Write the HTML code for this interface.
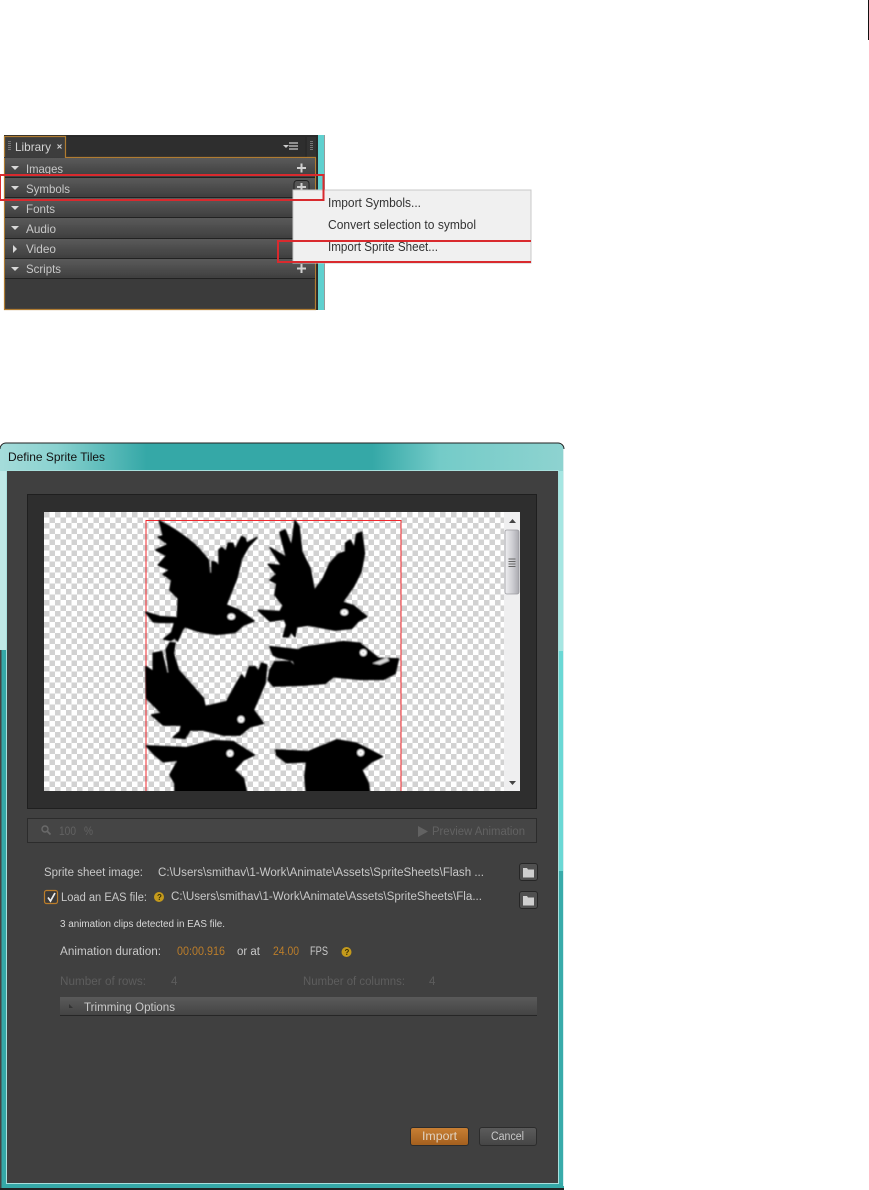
<!DOCTYPE html>
<html><head><meta charset="utf-8"><title>Define Sprite Tiles</title>
<style>
html,body{margin:0;padding:0;background:#fff;width:869px;height:1190px;overflow:hidden}
svg{display:block}
text{font-family:"Liberation Sans",sans-serif;font-size:11.500px}
</style></head><body>
<svg width="869" height="1190" viewBox="0 0 869 1190" xmlns="http://www.w3.org/2000/svg">
<defs>
<pattern id="chk" x="44" y="512" width="11" height="11" patternUnits="userSpaceOnUse">
<rect width="11" height="11" fill="#fff"/><rect width="5.500" height="5.500" fill="#d2d2d2"/><rect x="5.500" y="5.500" width="5.500" height="5.500" fill="#d2d2d2"/>
</pattern>
<linearGradient id="row" x1="0" y1="0" x2="0" y2="1"><stop offset="0" stop-color="#5a5a5a"/><stop offset="1" stop-color="#3f3f3f"/></linearGradient>
<linearGradient id="title" x1="0" y1="0" x2="1" y2="0"><stop offset="0" stop-color="#a5dcda"/><stop offset=".1" stop-color="#8ad2d0"/><stop offset=".26" stop-color="#35a8a7"/><stop offset=".66" stop-color="#35a8a7"/><stop offset=".78" stop-color="#74cbc8"/><stop offset="1" stop-color="#8ed3d0"/></linearGradient>
<linearGradient id="thumb" x1="0" y1="0" x2="1" y2="0"><stop offset="0" stop-color="#f0f0f2"/><stop offset=".6" stop-color="#c9c9ce"/><stop offset="1" stop-color="#a8a8ae"/></linearGradient>
<linearGradient id="imp" x1="0" y1="0" x2="0" y2="1"><stop offset="0" stop-color="#c98034"/><stop offset="1" stop-color="#a35f1e"/></linearGradient>
<linearGradient id="can" x1="0" y1="0" x2="0" y2="1"><stop offset="0" stop-color="#5c5c5c"/><stop offset="1" stop-color="#454545"/></linearGradient>
<linearGradient id="trim" x1="0" y1="0" x2="0" y2="1"><stop offset="0" stop-color="#5a5a5a"/><stop offset="1" stop-color="#444"/></linearGradient>
<clipPath id="pv"><rect x="44" y="512" width="460" height="279"/></clipPath>
<filter id="soft" x="-5%" y="-5%" width="110%" height="110%"><feGaussianBlur stdDeviation="0.7"/></filter>
<filter id="lite" x="-2%" y="-2%" width="104%" height="104%"><feGaussianBlur stdDeviation="0.35"/></filter>
</defs>

<rect width="869" height="1190" fill="#fff"/>
<rect x="868" y="0" width="1" height="40" fill="#111"/>

<!-- Library panel -->
<g filter="url(#lite)">
<rect x="4" y="135" width="320" height="175" fill="#2b2b2b"/>
<rect x="318" y="135" width="6" height="175" fill="#5fd0cf"/>
<rect x="324" y="135" width="1" height="175" fill="#999"/>
<rect x="4" y="157" width="312" height="153" fill="#3b3b3b"/>
<rect x="66" y="137" width="239" height="20" fill="#2d2d2d"/>
<rect x="307" y="137" width="9" height="20" fill="#333"/>
<rect x="5" y="137" width="60" height="20" fill="#3d3d3d"/>
<path d="M4.500 157V136.500H65.500V157.500H316" fill="none" stroke="#b07c30" stroke-width="1.200"/>
<path d="M4.500 158V309.500H315.500V157.500" fill="none" stroke="#b07c30" stroke-width="1.200"/>
<g fill="#767676"><rect x="8" y="141" width="3" height="1"/><rect x="8" y="143" width="3" height="1"/><rect x="8" y="145" width="3" height="1"/><rect x="8" y="147" width="3" height="1"/><rect x="8" y="149" width="3" height="1"/><rect x="310" y="141" width="3" height="1"/><rect x="310" y="143" width="3" height="1"/><rect x="310" y="145" width="3" height="1"/><rect x="310" y="147" width="3" height="1"/><rect x="310" y="149" width="3" height="1"/></g>
<text x="15" y="151" fill="#d4d4d4" style="font-size:12px" textLength="36" lengthAdjust="spacingAndGlyphs">Library</text>
<path d="M57.500 144.500l4 4m0-4l-4 4" stroke="#d0d0d0" stroke-width="1.100"/>
<path d="M283 145h6l-3 3z" fill="#ccc"/><path d="M289 143h9M289 146h9M289 149h9" stroke="#ccc" stroke-width="1.200"/>

<rect x="5" y="158" width="310" height="19" fill="url(#row)"/><rect x="5" y="177" width="310" height="1" fill="#222"/>
<rect x="5" y="178" width="310" height="19" fill="url(#row)"/><rect x="5" y="197" width="310" height="1" fill="#222"/>
<rect x="5" y="198" width="310" height="19" fill="url(#row)"/><rect x="5" y="217" width="310" height="1" fill="#222"/>
<rect x="5" y="218" width="310" height="20" fill="url(#row)"/><rect x="5" y="238" width="310" height="1" fill="#222"/>
<rect x="5" y="239" width="310" height="19" fill="url(#row)"/><rect x="5" y="258" width="310" height="1" fill="#222"/>
<rect x="5" y="259" width="310" height="19" fill="url(#row)"/><rect x="5" y="278" width="310" height="1" fill="#222"/>

<g fill="#d8d8d8">
<path d="M11 166h8l-4 4z"/><path d="M11 186h8l-4 4z"/><path d="M11 206h8l-4 4z"/><path d="M11 226h8l-4 4z"/><path d="M13 245v8l4-4z"/><path d="M11 267h8l-4 4z"/>
</g>
<g fill="#c8c8c8" style="font-size:12px">
<text x="26" y="173" style="font-size:12px" textLength="37" lengthAdjust="spacingAndGlyphs">Images</text>
<text x="26" y="193" style="font-size:12px" textLength="44" lengthAdjust="spacingAndGlyphs">Symbols</text>
<text x="26" y="213" style="font-size:12px" textLength="29" lengthAdjust="spacingAndGlyphs">Fonts</text>
<text x="26" y="233" style="font-size:12px" textLength="30" lengthAdjust="spacingAndGlyphs">Audio</text>
<text x="26" y="253" style="font-size:12px" textLength="30" lengthAdjust="spacingAndGlyphs">Video</text>
<text x="26" y="273" style="font-size:12px" textLength="35" lengthAdjust="spacingAndGlyphs">Scripts</text>
</g>
<path d="M297 168h9M301.500 163.500v9M297 268.500h9M301.500 264v9" stroke="#d0d0d0" stroke-width="2"/>
<rect x="294" y="180.500" width="15" height="14" rx="3" fill="#555" stroke="#222"/>
<path d="M297 187h9M301.500 183v8" stroke="#d0d0d0" stroke-width="2"/>

<!-- Context menu -->
<rect x="293" y="190" width="238" height="73" fill="#f0f0f0" stroke="#c8c8c8"/>
<g fill="#333">
<text x="328" y="207" style="font-size:12.500px" textLength="93" lengthAdjust="spacingAndGlyphs">Import Symbols...</text>
<text x="328" y="229" style="font-size:12.500px" textLength="148" lengthAdjust="spacingAndGlyphs">Convert selection to symbol</text>
<text x="328" y="251" style="font-size:12.500px" textLength="110" lengthAdjust="spacingAndGlyphs">Import Sprite Sheet...</text>
</g>
<rect x="0" y="175" width="323.500" height="25" fill="none" stroke="#d92a2f" stroke-width="2"/>
<path d="M531 241H278V262H531" fill="none" stroke="#d92a2f" stroke-width="2"/>
</g>

<!-- Dialog frame -->
<path d="M0 1190V449a6 6 0 0 1 6-6H558a6 6 0 0 1 6 6V1190Z" fill="#35a8a7"/>
<path d="M0 471V449a6 6 0 0 1 6-6H558a6 6 0 0 1 6 6V471Z" fill="url(#title)"/>
<path d="M0 449a6 6 0 0 1 6-6H558a6 6 0 0 1 6 6" fill="none" stroke="#222" stroke-width="1"/>
<rect x="0" y="471" width="7" height="179" fill="#bfe8e6"/>
<rect x="1.500" y="650" width="5.500" height="534" fill="#35a8a7"/>
<rect x="0" y="650" width="1.500" height="539" fill="#444"/>
<rect x="558" y="471" width="5" height="180" fill="#a6e6e2"/>
<rect x="558" y="651" width="5" height="220" fill="#6ad8d5"/>
<rect x="558" y="871" width="5" height="312" fill="#38abaa"/>
<rect x="563" y="449" width="1" height="737" fill="#d8eeee"/>
<rect x="0" y="1188" width="564" height="2" fill="#222"/>
<rect x="6.500" y="470.500" width="552" height="713" fill="#404040" stroke="#a8e0dd"/>
<text x="8" y="461" fill="#111" style="font-size:12px" textLength="97" lengthAdjust="spacingAndGlyphs">Define Sprite Tiles</text>

<!-- Preview -->
<rect x="27" y="494" width="510" height="315" fill="#2e2e2e"/>
<rect x="27.500" y="494.500" width="509" height="314" fill="none" stroke="#1f1f1f"/>
<rect x="44" y="512" width="460" height="279" fill="url(#chk)"/>
<g clip-path="url(#pv)">
<rect x="146" y="520.500" width="255" height="290" fill="none" stroke="#f0282e" stroke-width="1"/>
<g filter="url(#soft)">
<g transform="translate(140 515) scale(.33333)" fill="#000" stroke="#000" stroke-width="5" stroke-linejoin="round">
<path d="M58 18C90 35 140 65 175 100L205 135L208 175L216 176L216 140C228 140 232 150 238 155L237 105L245 98L258 110L265 85L278 85L285 105L305 65L315 70L320 85L350 68L325 95L305 130L290 190L258 270L295 285L342 318L310 330L285 352L230 358L180 350L135 335L128 342L112 378L105 368L92 376L72 372L96 352L104 322L60 322L40 320L18 292L60 305L105 308L112 310L115 250L90 225L95 195L70 178L90 165L55 150L80 122L48 105L85 88L55 66L70 62Z"/>
<ellipse cx="274" cy="305" rx="11" ry="9" fill="#fff" stroke="none"/><circle cx="274" cy="305" r="2" fill="#777" stroke="none"/>
</g>
<g transform="translate(255 515) scale(.33333)" fill="#000" stroke="#000" stroke-width="5" stroke-linejoin="round">
<path d="M120 18L132 35L140 110L165 160L178 228L205 190L225 145L250 118L272 110L272 85L285 76L298 100L305 58L320 52L328 115L318 170L295 215L262 262L295 272L335 305L310 318L290 340L240 345L160 330L125 335L120 365L108 350L100 365L85 365L95 330L88 312L45 318L10 286L75 290L85 272L60 240L65 205L45 195L65 178L40 148L80 152L45 98L95 128L75 52L90 45L110 95Z"/>
<ellipse cx="268" cy="292" rx="11" ry="9" fill="#fff" stroke="none"/><circle cx="268" cy="292" r="2" fill="#777" stroke="none"/>
</g>
<g transform="translate(130 620) scale(.33333)" fill="#000" stroke="#000" stroke-width="5" stroke-linejoin="round">
<path d="M420 80L505 90L520 82L640 65L690 70L745 115L805 117L795 160L760 178L690 178L610 170L585 190L520 195L430 198L415 180L420 150L435 125L480 125L500 145L490 122L445 112L430 105Z"/>
<path d="M728 130L770 113L778 122L750 134Z" fill="#d8d8d8" stroke="none"/>
<circle cx="700" cy="98" r="10" fill="#fff" stroke="none"/><circle cx="700" cy="98" r="2" fill="#777" stroke="none"/>
<path d="M120 68L135 70L130 100L145 150L220 235L225 260L290 245L320 190L335 165L345 180L358 140L375 140L385 155L395 130L410 135L405 190L370 270L400 310L360 320L330 345L280 345L220 330L180 330L165 355L130 352L150 335L155 315L100 315L65 285L95 280L50 235L48 140L70 155L70 100L95 95L110 160L118 160L108 90Z"/>
<circle cx="333" cy="298" r="10" fill="#fff" stroke="none"/><circle cx="333" cy="298" r="2" fill="#777" stroke="none"/>
<path d="M50 378L170 383L250 362L310 365L372 405L340 420L312 450L340 475L352 530L135 530L135 490L120 465L145 420L100 425L75 405Z"/>
<circle cx="300" cy="400" r="10" fill="#fff" stroke="none"/><circle cx="300" cy="400" r="2" fill="#777" stroke="none"/>
<path d="M437 390L535 395L620 360L680 370L757 410L725 425L695 450L715 490L720 530L530 530L525 470L530 425L470 428L440 405Z"/>
<circle cx="692" cy="398" r="10" fill="#fff" stroke="none"/><circle cx="692" cy="398" r="2" fill="#777" stroke="none"/>
</g>
</g>
</g>
<!-- Scrollbar -->
<rect x="504" y="512" width="16" height="279" fill="#efeff0"/>
<path d="M509 523h7l-3.500-4z" fill="#444"/>
<path d="M509 781h7l-3.500 4z" fill="#444"/>
<rect x="505" y="530" width="14" height="64" rx="2" fill="url(#thumb)" stroke="#9a9a9f" stroke-width=".8"/>
<path d="M508.500 559h7M508.500 561.500h7M508.500 564h7M508.500 566.500h7" stroke="#666"/>

<!-- Toolbar -->
<rect x="27" y="818" width="510" height="25" fill="#454545"/>
<rect x="27.500" y="818.500" width="509" height="24" fill="none" stroke="#2c2c2c"/>
<circle cx="45" cy="829" r="3" fill="none" stroke="#6a6a6a" stroke-width="1.400"/>
<path d="M47.500 831.500l3 3" stroke="#6a6a6a" stroke-width="1.600"/>
<g fill="#626262">
<text x="59" y="835" textLength="17" lengthAdjust="spacingAndGlyphs">100</text>
<text x="84" y="835" textLength="9" lengthAdjust="spacingAndGlyphs">%</text>
<path d="M418 826l10 5.500l-10 5.500z"/>
<text x="432" y="835" textLength="93" lengthAdjust="spacingAndGlyphs">Preview Animation</text>
</g>

<!-- Form -->
<g fill="#c8c8c8">
<text x="44" y="876" textLength="99" lengthAdjust="spacingAndGlyphs">Sprite sheet image:</text>
<text x="158" y="876" textLength="326" lengthAdjust="spacingAndGlyphs">C:\Users\smithav\1-Work\Animate\Assets\SpriteSheets\Flash ...</text>
<text x="61" y="901" textLength="86" lengthAdjust="spacingAndGlyphs">Load an EAS file:</text>
<text x="171" y="900" textLength="311" lengthAdjust="spacingAndGlyphs">C:\Users\smithav\1-Work\Animate\Assets\SpriteSheets\Fla...</text>
<text x="60" y="927" style="font-size:10px" fill="#d8d8d8" textLength="165" lengthAdjust="spacingAndGlyphs">3 animation clips detected in EAS file.</text>
<text x="60" y="955" textLength="101" lengthAdjust="spacingAndGlyphs">Animation duration:</text>
<text x="237" y="955" textLength="23" lengthAdjust="spacingAndGlyphs">or at</text>
<text x="310" y="955" textLength="18" lengthAdjust="spacingAndGlyphs">FPS</text>
</g>
<g fill="#bb7d2a">
<text x="177" y="955" textLength="48" lengthAdjust="spacingAndGlyphs">00:00.916</text>
<text x="273" y="955" textLength="26" lengthAdjust="spacingAndGlyphs">24.00</text>
</g>
<g fill="#5d5d5d">
<text x="60" y="985" textLength="86" lengthAdjust="spacingAndGlyphs">Number of rows:</text>
<text x="171" y="985">4</text>
<text x="303" y="985" textLength="102" lengthAdjust="spacingAndGlyphs">Number of columns:</text>
<text x="429" y="985">4</text>
</g>

<!-- Checkbox -->
<rect x="44.500" y="890.500" width="13" height="13" rx="2" fill="#3a3a3a" stroke="#bb7d2a" stroke-width="1.200"/>
<path d="M48 897.500l2.500 3.500l4.500-8" fill="none" stroke="#eee" stroke-width="1.700"/>

<!-- Help icons -->
<circle cx="159" cy="897" r="5" fill="#c49a1c"/>
<text x="157" y="900" fill="#3a3000" font-weight="bold" style="font-size:8px">?</text>
<circle cx="346.500" cy="952" r="5" fill="#c49a1c"/>
<text x="344.500" y="955" fill="#3a3000" font-weight="bold" style="font-size:8px">?</text>

<!-- Folder buttons -->
<g>
<rect x="519.500" y="863.500" width="18" height="17" rx="2.500" fill="#505050" stroke="#262626"/>
<path d="M523 868h4l1 1.500h6v8h-11z" fill="#cfcfcf"/>
<rect x="519.500" y="891.500" width="18" height="17" rx="2.500" fill="#505050" stroke="#262626"/>
<path d="M523 896h4l1 1.500h6v8h-11z" fill="#cfcfcf"/>
</g>

<!-- Trimming -->
<rect x="60" y="997" width="477" height="18" fill="url(#trim)"/>
<rect x="60" y="1015" width="477" height="1" fill="#262626"/>
<path d="M69 1004l4 4h-4z" fill="#333"/>
<text x="84" y="1011" fill="#c8c8c8" textLength="91" lengthAdjust="spacingAndGlyphs">Trimming Options</text>

<!-- Buttons -->
<rect x="410.500" y="1127.500" width="58" height="18" rx="2.500" fill="url(#imp)" stroke="#2c2c2c"/>
<text x="422" y="1140" fill="#e0d2c0" textLength="35" lengthAdjust="spacingAndGlyphs">Import</text>
<rect x="479.500" y="1127.500" width="57" height="18" rx="2.500" fill="url(#can)" stroke="#2c2c2c"/>
<text x="491" y="1140" fill="#c8c8c8" textLength="33" lengthAdjust="spacingAndGlyphs">Cancel</text>
</svg>
</body></html>
